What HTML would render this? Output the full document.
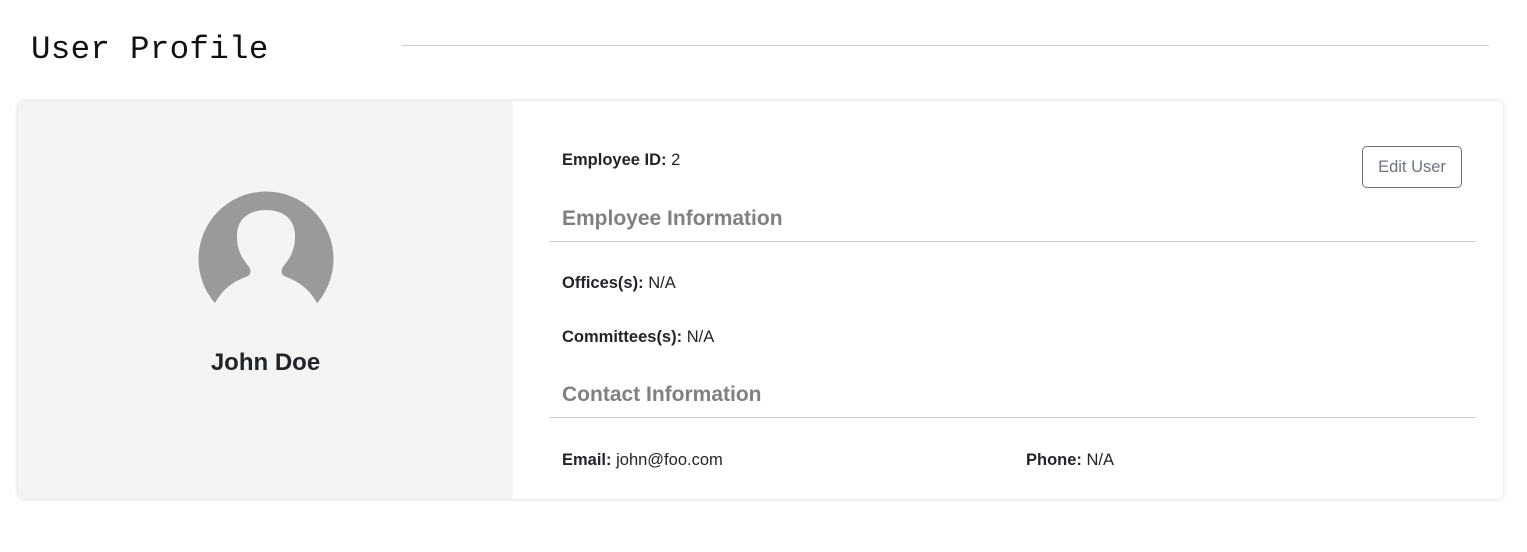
<!DOCTYPE html>
<html><head><style>
body{margin:0;background:#fff;font-family:"Liberation Sans",sans-serif;color:#212529;}
.t{position:absolute;left:31px;top:31px;font-family:"Liberation Mono",monospace;font-size:32.5px;color:#111;letter-spacing:0.3px;}
.hr{position:absolute;left:402px;top:45px;width:1087px;height:1px;background:#ccc;}
.card{position:absolute;left:18px;top:101px;width:1485px;height:398px;border-radius:6px;box-shadow:0 0 4px rgba(0,0,0,.18);overflow:hidden;background:#fff;}
.left{position:absolute;left:0;top:0;width:495px;height:398px;background:#f4f4f4;}
.name{position:absolute;left:0;width:495px;top:248px;text-align:center;font-size:24px;font-weight:bold;color:#212529;}
.a{position:absolute;font-size:16.5px;}
.a b{font-weight:bold;}
.h{position:absolute;font-size:21px;font-weight:bold;color:#808080;}
.line{position:absolute;left:531px;width:927px;height:1px;background:#ccc;}
.btn{position:absolute;left:1344px;top:45px;width:100px;height:42px;border:1px solid #6c757d;border-radius:5px;box-sizing:border-box;color:#6c757d;font-size:16.5px;text-align:center;line-height:40px;}
</style></head><body>
<div class="t">User Profile</div><div class="hr"></div>
<div class="card">
<div class="left">
<svg style="position:absolute;left:180px;top:90px" width="136" height="136" viewBox="0 0 136 136">
<defs><clipPath id="c"><rect x="0" y="0" width="136" height="112"/></clipPath></defs>
<g clip-path="url(#c)">
<circle cx="68" cy="68" r="67.5" fill="#9a9a9a"/>
<path d="M68 19 C52 19 39 27 39 45 C39 62 46 69 51 76 C53 79 53 83 50 85 C40 89 27 94 17 112 L119 112 C109 94 96 89 86 85 C83 83 83 79 85 76 C90 69 97 62 97 45 C97 27 84 19 68 19 Z" fill="#f4f4f4"/>
</g></svg>
<div class="name">John Doe</div>
</div>
<div class="a" style="left:544px;top:50px"><b>Employee ID:</b> 2</div>
<div class="btn">Edit User</div>
<div class="h" style="left:544px;top:106px">Employee Information</div>
<div class="line" style="top:140px"></div>
<div class="a" style="left:544px;top:173px"><b>Offices(s):</b> N/A</div>
<div class="a" style="left:544px;top:227px"><b>Committees(s):</b> N/A</div>
<div class="h" style="left:544px;top:282px">Contact Information</div>
<div class="line" style="top:316px"></div>
<div class="a" style="left:544px;top:350px"><b>Email:</b> john@foo.com</div>
<div class="a" style="left:1008px;top:350px"><b>Phone:</b> N/A</div>
</div>
</body></html>
